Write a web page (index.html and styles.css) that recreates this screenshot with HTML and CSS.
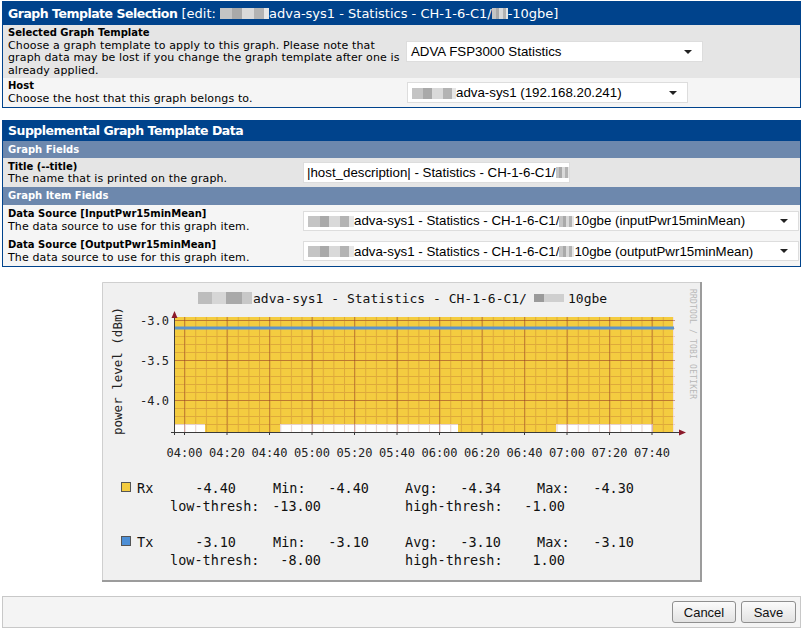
FILE: index.html
```html
<!DOCTYPE html>
<html>
<head>
<meta charset="utf-8">
<title>Graph Template Selection</title>
<link rel="stylesheet" href="styles.css">
</head>
<body>
<div class="page">
  <section class="panel panel-select">
    <div class="panel-head"><b>Graph Template Selection</b> <span class="edit">[edit: <span class="blur blur-head1"></span>adva-sys1 - Statistics - CH-1-6-C1/<span class="blur blur-head2"></span>-10gbe]</span></div>
    <div class="row row-dark row-template">
      <div class="lbl">
        <div class="lbl-title">Selected Graph Template</div>
        <div class="lbl-desc">Choose a graph template to apply to this graph. Please note that<br>graph data may be lost if you change the graph template after one is<br>already applied.</div>
      </div>
      <div class="ctl">
        <div class="select sel-template"><span class="sel-text">ADVA FSP3000 Statistics</span><span class="arrow"></span></div>
      </div>
    </div>
    <div class="row row-light row-host">
      <div class="lbl">
        <div class="lbl-title">Host</div>
        <div class="lbl-desc">Choose the host that this graph belongs to.</div>
      </div>
      <div class="ctl">
        <div class="select sel-host"><span class="sel-text"><span class="blur blur-host"></span>adva-sys1 (192.168.20.241)</span><span class="arrow"></span></div>
      </div>
    </div>
  </section>

  <section class="panel panel-data">
    <div class="panel-head panel-head-sm"><b>Supplemental Graph Template Data</b></div>
    <div class="subhead">Graph Fields</div>
    <div class="row row-dark row-title">
      <div class="lbl lbl-narrow">
        <div class="lbl-title">Title (--title)</div>
        <div class="lbl-desc">The name that is printed on the graph.</div>
      </div>
      <div class="ctl">
        <div class="input-text">|host_description| - Statistics - CH-1-6-C1/<span class="blur blur-title"></span></div>
      </div>
    </div>
    <div class="subhead subhead-2">Graph Item Fields</div>
    <div class="row row-light row-ds">
      <div class="lbl lbl-narrow">
        <div class="lbl-title">Data Source [InputPwr15minMean]</div>
        <div class="lbl-desc">The data source to use for this graph item.</div>
      </div>
      <div class="ctl">
        <div class="select sel-ds"><span class="sel-text"><span class="blur blur-ds1"></span>adva-sys1 - Statistics - CH-1-6-C1/<span class="blur blur-ds2"></span>10gbe (inputPwr15minMean)</span><span class="arrow"></span></div>
      </div>
    </div>
    <div class="row row-light row-ds row-ds-last">
      <div class="lbl lbl-narrow">
        <div class="lbl-title">Data Source [OutputPwr15minMean]</div>
        <div class="lbl-desc">The data source to use for this graph item.</div>
      </div>
      <div class="ctl">
        <div class="select sel-ds"><span class="sel-text"><span class="blur blur-ds1"></span>adva-sys1 - Statistics - CH-1-6-C1/<span class="blur blur-ds2"></span>10gbe (outputPwr15minMean)</span><span class="arrow"></span></div>
      </div>
    </div>
  </section>

  <figure class="graph">
    <svg width="600" height="300" viewBox="0 0 600 300" xmlns="http://www.w3.org/2000/svg">
      <defs>
        <pattern id="minor" x="72" y="38" width="10.625" height="8" patternUnits="userSpaceOnUse">
          <path d="M0.5 0 V8 M0 0.5 H10.625" stroke="rgba(150,60,40,0.24)" stroke-width="1" fill="none"/>
        </pattern>
      </defs>
      <rect x="0" y="0" width="600" height="300" fill="#f0f0f0"/>
      <path d="M0.5 299 V0.5 H599" stroke="#cfcfcf" stroke-width="1" fill="none"/>
      <path d="M599 0 V299 H0" stroke="#9c9c9c" stroke-width="2" fill="none"/>

      <text class="g-title" x="151" y="21">adva-sys1 - Statistics - CH-1-6-C1/</text>
      <rect x="96" y="10" width="14" height="12" fill="#bdbdbd"/>
      <rect x="110" y="10" width="14" height="12" fill="#d6d6d6"/>
      <rect x="124" y="10" width="16" height="12" fill="#a9a9a9"/>
      <rect x="140" y="10" width="10" height="12" fill="#c8c8c8"/>
      <rect x="432" y="12" width="10" height="8" fill="#9a9a9a"/>
      <rect x="442" y="12" width="20" height="8" fill="#cfcfcf"/>
      <text class="g-title" x="466" y="21">10gbe</text>

      <text class="g-rrd" x="0" y="0" transform="translate(588,7) rotate(90)" textLength="110">RRDTOOL / TOBI OETIKER</text>

      <text class="g-axis g-ylabel" transform="translate(20,89) rotate(-90)" text-anchor="middle">power level (dBm)</text>

      <rect x="72" y="35" width="501" height="115" fill="#ffffff"/>
      <path d="M72 35 H571 V150 H551 V142 H454 V150 H356 V142 H178 V150 H103 V142 H72 Z" fill="#f4cc40"/>
      <rect x="72" y="35" width="501" height="115" fill="url(#minor)"/>
      <g stroke="rgba(130,30,30,0.36)" stroke-width="1">
        <line x1="82.5" y1="35" x2="82.5" y2="150"/>
        <line x1="125" y1="35" x2="125" y2="150"/>
        <line x1="167.5" y1="35" x2="167.5" y2="150"/>
        <line x1="210" y1="35" x2="210" y2="150"/>
        <line x1="252.5" y1="35" x2="252.5" y2="150"/>
        <line x1="295" y1="35" x2="295" y2="150"/>
        <line x1="337.5" y1="35" x2="337.5" y2="150"/>
        <line x1="380" y1="35" x2="380" y2="150"/>
        <line x1="422.5" y1="35" x2="422.5" y2="150"/>
        <line x1="465" y1="35" x2="465" y2="150"/>
        <line x1="507.5" y1="35" x2="507.5" y2="150"/>
        <line x1="550" y1="35" x2="550" y2="150"/>
        <line x1="72" y1="38.5" x2="573" y2="38.5"/>
        <line x1="72" y1="78.5" x2="573" y2="78.5"/>
        <line x1="72" y1="118.5" x2="573" y2="118.5"/>
      </g>
      <line x1="72" y1="46" x2="572" y2="46" stroke="#5b93cb" stroke-width="3"/>

      <g stroke="#3a3a3a" stroke-width="1">
        <line x1="72.5" y1="32" x2="72.5" y2="153"/>
        <line x1="69" y1="150.5" x2="578" y2="150.5"/>
        <line x1="82.5" y1="150" x2="82.5" y2="153"/>
        <line x1="125" y1="150" x2="125" y2="153"/>
        <line x1="167.5" y1="150" x2="167.5" y2="153"/>
        <line x1="210" y1="150" x2="210" y2="153"/>
        <line x1="252.5" y1="150" x2="252.5" y2="153"/>
        <line x1="295" y1="150" x2="295" y2="153"/>
        <line x1="337.5" y1="150" x2="337.5" y2="153"/>
        <line x1="380" y1="150" x2="380" y2="153"/>
        <line x1="422.5" y1="150" x2="422.5" y2="153"/>
        <line x1="465" y1="150" x2="465" y2="153"/>
        <line x1="507.5" y1="150" x2="507.5" y2="153"/>
        <line x1="550" y1="150" x2="550" y2="153"/>
      </g>
      <path d="M69.5 36 L72.5 29 L75.5 36 Z" fill="#8b1a2a"/>
      <path d="M577 147.5 L584 150.5 L577 153.5 Z" fill="#8b1a2a"/>

      <g class="g-axis" text-anchor="end">
        <text x="67" y="42.5">-3.0</text>
        <text x="67" y="82.5">-3.5</text>
        <text x="67" y="122.5">-4.0</text>
      </g>
      <g class="g-axis" text-anchor="middle">
        <text x="82.5" y="175">04:00</text>
        <text x="125" y="175">04:20</text>
        <text x="167.5" y="175">04:40</text>
        <text x="210" y="175">05:00</text>
        <text x="252.5" y="175">05:20</text>
        <text x="295" y="175">05:40</text>
        <text x="337.5" y="175">06:00</text>
        <text x="380" y="175">06:20</text>
        <text x="422.5" y="175">06:40</text>
        <text x="465" y="175">07:00</text>
        <text x="507.5" y="175">07:20</text>
        <text x="550" y="175">07:40</text>
      </g>

      <rect x="19.5" y="200.5" width="9" height="9" fill="#f4cc40" stroke="#555"/>
      <rect x="19.5" y="254.5" width="9" height="9" fill="#4d8fd6" stroke="#555"/>
      <g class="g-legend">
        <text x="35" y="210.5">Rx</text>
        <text x="171" y="210.5">Min:</text>
        <text x="303" y="210.5">Avg:</text>
        <text x="435" y="210.5">Max:</text>
        <text x="68" y="228.5">low-thresh:</text>
        <text x="303" y="228.5">high-thresh:</text>
        <text x="35" y="264.5">Tx</text>
        <text x="171" y="264.5">Min:</text>
        <text x="303" y="264.5">Avg:</text>
        <text x="435" y="264.5">Max:</text>
        <text x="68" y="282.5">low-thresh:</text>
        <text x="303" y="282.5">high-thresh:</text>
      </g>
      <g class="g-legend" text-anchor="end">
        <text x="134" y="210.5">-4.40</text>
        <text x="267" y="210.5">-4.40</text>
        <text x="399" y="210.5">-4.34</text>
        <text x="532" y="210.5">-4.30</text>
        <text x="219" y="228.5">-13.00</text>
        <text x="463" y="228.5">-1.00</text>
        <text x="134" y="264.5">-3.10</text>
        <text x="267" y="264.5">-3.10</text>
        <text x="399" y="264.5">-3.10</text>
        <text x="532" y="264.5">-3.10</text>
        <text x="219" y="282.5">-8.00</text>
        <text x="463" y="282.5">1.00</text>
      </g>
    </svg>
  </figure>

  <div class="actions">
    <button class="btn btn-cancel" type="button">Cancel</button>
    <button class="btn btn-save" type="button">Save</button>
  </div>
</div>
</body>
</html>
```

FILE: styles.css
```css
html, body {
  margin: 0;
  padding: 0;
  background: #ffffff;
}

body {
  font-family: "DejaVu Sans", Verdana, sans-serif;
  color: #000;
}

.page {
  display: flex;
  flex-direction: column;
  padding: 1px 3px 0 2px;
}

.panel {
  border: 1px solid #00438c;
  display: flex;
  flex-direction: column;
}

.panel-data {
  margin-top: 12px;
}

.panel-head {
  background: #00438c;
  color: #ffffff;
  height: 23px;
  line-height: 23px;
  padding-left: 5px;
  font-size: 13px;
  white-space: nowrap;
}

.panel-head b {
  font-weight: bold;
  font-size: 12.5px;
  letter-spacing: -0.5px;
}

.panel-head .edit {
  font-weight: normal;
}

.panel-head-sm {
  height: 20px;
  line-height: 20px;
}

.blur {
  display: inline-block;
  vertical-align: middle;
  height: 11px;
  background: linear-gradient(90deg, #c4c4c4 0 25%, #a9a9a9 25% 45%, #d9d9d9 45% 70%, #b3b3b3 70% 90%, #e6e6e6 90% 100%);
}

.blur-head1 { width: 49px; margin-top: -2px; }
.blur-head2 { width: 16px; margin-top: -2px; }
.blur-host { width: 44px; }
.blur-title { width: 16px; }
.blur-ds1 { width: 46px; }
.blur-ds2 { width: 15px; }

.subhead {
  background: #6d88ad;
  color: #ffffff;
  font-size: 10px;
  font-weight: bold;
  height: 17px;
  line-height: 17px;
  padding-left: 5px;
}

.subhead-2 {
  height: 18px;
  line-height: 18px;
}

.row {
  display: flex;
  align-items: center;
}

.row-dark { background: #e5e5e5; }
.row-light { background: #f5f5f5; }

.row-template { height: 53px; }
.row-host { height: 29px; }
.row-title { height: 29px; }
.row-ds { height: 31px; }
.row-ds-last { height: 30px; }

.lbl {
  width: 403px;
  padding-left: 5px;
  box-sizing: border-box;
  white-space: nowrap;
}

.lbl-narrow {
  width: 300px;
}

.lbl-title {
  font-weight: bold;
  font-size: 10px;
  line-height: 13px;
  margin-bottom: 1px;
}

.lbl-desc {
  font-size: 11px;
  line-height: 12.5px;
  letter-spacing: 0.13px;
}

.row-title .lbl-title {
  margin-bottom: 0;
}

.ctl {
  flex: 1;
  display: flex;
}

.select,
.input-text {
  font-family: "Liberation Sans", Arial, sans-serif;
  font-size: 13.3px;
  background: #ffffff;
  border: 1px solid #dddddd;
  box-sizing: border-box;
  display: flex;
  align-items: center;
  white-space: nowrap;
  color: #000;
}

.sel-text {
  padding-left: 4px;
  flex: 1;
}

.arrow {
  width: 0;
  height: 0;
  border-left: 4px solid transparent;
  border-right: 4px solid transparent;
  border-top: 4px solid #222;
  margin-right: 10px;
}

.sel-template {
  width: 297px;
  height: 21px;
}

.sel-host {
  width: 281px;
  height: 21px;
  margin-left: 1px;
}

.input-text {
  width: 267px;
  height: 21px;
  padding-left: 3px;
}

.sel-ds {
  width: 496px;
  height: 20px;
}

.graph {
  margin: 15px 0 0 0;
  display: flex;
  justify-content: center;
}

.graph svg {
  display: block;
  margin-left: 1px;
}

.g-title {
  font-family: "DejaVu Sans Mono", monospace;
  font-size: 13px;
  fill: #111;
}

.g-axis {
  font-family: "DejaVu Sans Mono", monospace;
  font-size: 12px;
  fill: #222;
}

.g-ylabel {
  font-size: 12.5px;
}

.g-legend {
  font-family: "DejaVu Sans Mono", monospace;
  font-size: 13.5px;
  fill: #111;
}

.g-rrd {
  font-family: "DejaVu Sans Mono", monospace;
  font-size: 8px;
  fill: #b8b8b8;
}

.actions {
  margin-top: 14px;
  height: 30px;
  border: 1px solid #c8c8c8;
  background: #f4f4f4;
  display: flex;
  justify-content: flex-end;
  align-items: center;
  gap: 5px;
  padding-right: 4px;
}

.btn {
  font-family: "Liberation Sans", Arial, sans-serif;
  font-size: 13px;
  height: 22px;
  padding: 0;
  border: 1px solid #8f8f8f;
  border-radius: 3px;
  background: linear-gradient(#fbfbfb, #e2e2e2);
  color: #111;
}

.btn-cancel { width: 64px; }
.btn-save { width: 55px; }
```
